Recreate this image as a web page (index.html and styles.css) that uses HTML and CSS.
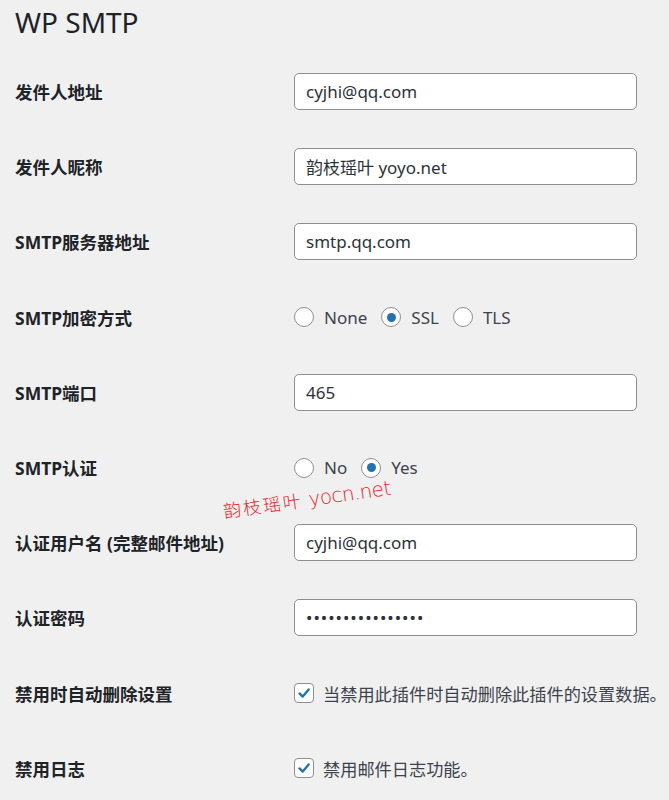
FILE: index.html
```html
<!DOCTYPE html>
<html lang="zh-CN">
  <head>
    <meta charset="UTF-8" />
    <title>WP SMTP</title>
    <link rel="stylesheet" href="styles.css">
  </head>
  <body>
    <div class="wrap">
      <h1>WP SMTP</h1>

      <form class="form-table">
        <div class="row">
          <label class="row-label">发件人地址</label>
          <input class="text-input" type="text" value="cyjhi@qq.com" />
        </div>

        <div class="row">
          <label class="row-label">发件人昵称</label>
          <input class="text-input" type="text" value="韵枝瑶叶 yoyo.net" />
        </div>

        <div class="row">
          <label class="row-label">SMTP服务器地址</label>
          <input class="text-input" type="text" value="smtp.qq.com" />
        </div>

        <div class="row">
          <label class="row-label">SMTP加密方式</label>
          <div class="options">
            <span class="option"><span class="radio"></span>None</span>
            <span class="option"><span class="radio checked"></span>SSL</span>
            <span class="option"><span class="radio"></span>TLS</span>
          </div>
        </div>

        <div class="row">
          <label class="row-label">SMTP端口</label>
          <input class="text-input" type="text" value="465" />
        </div>

        <div class="row">
          <label class="row-label">SMTP认证</label>
          <div class="options">
            <span class="option"><span class="radio"></span>No</span>
            <span class="option"><span class="radio checked"></span>Yes</span>
          </div>
        </div>

        <div class="row watermark-row">
          <label class="row-label">认证用户名 (完整邮件地址)</label>
          <input class="text-input" type="text" value="cyjhi@qq.com" />
          <span class="watermark">韵枝瑶叶 <em>yocn.net</em></span>
        </div>

        <div class="row">
          <label class="row-label">认证密码</label>
          <input class="text-input password" type="text" value="••••••••••••••••" />
        </div>

        <div class="row">
          <label class="row-label">禁用时自动删除设置</label>
          <span class="option check-option">
            <span class="checkbox">
              <svg viewBox="0 0 20 20" width="20" height="20">
                <path d="M5 10.5 L8.6 14 L15.2 6" fill="none" stroke="#2271b1" stroke-width="2.6" stroke-linecap="round" stroke-linejoin="round" />
              </svg>
            </span>当禁用此插件时自动删除此插件的设置数据。
          </span>
        </div>

        <div class="row">
          <label class="row-label">禁用日志</label>
          <span class="option check-option">
            <span class="checkbox">
              <svg viewBox="0 0 20 20" width="20" height="20">
                <path d="M5 10.5 L8.6 14 L15.2 6" fill="none" stroke="#2271b1" stroke-width="2.6" stroke-linecap="round" stroke-linejoin="round" />
              </svg>
            </span>禁用邮件日志功能。
          </span>
        </div>
      </form>
    </div>
  </body>
</html>
```

FILE: styles.css
```css
:root {
  --bg-color: #f0f0f1;
  --text-color: #1d2327;
  --muted-text: #3c434a;
  --border-color: #8c8f94;
  --accent-color: #2271b1;
}

body {
  margin: 0;
  padding: 0;
  background-color: var(--bg-color);
  color: var(--text-color);
  font-family: "Segoe UI", "Noto Sans", "Noto Sans CJK SC", sans-serif;
  overflow: hidden;
}

.wrap {
  padding: 0 15px;
}

h1 {
  margin: 0;
  padding-top: 3px;
  font-size: 28px;
  font-weight: 400;
  line-height: 38px;
  color: var(--text-color);
}

.form-table {
  margin-top: 13px;
}

.row {
  display: grid;
  grid-template-columns: 279px 343px;
  align-items: center;
  height: 75.2px;
}

.row-label {
  font-size: 17.5px;
  font-weight: 700;
  color: var(--text-color);
  font-family: "Noto Sans", "Noto Sans CJK SC", sans-serif;
}

.text-input {
  box-sizing: border-box;
  width: 343px;
  height: 37px;
  padding: 0 11px;
  border: 1px solid var(--border-color);
  border-radius: 5px;
  background-color: #fff;
  color: #2c3338;
  font-family: "Noto Sans", "Noto Sans CJK SC", sans-serif;
  font-size: 17px;
  outline: none;
}

.text-input.password {
  font-size: 17px;
  letter-spacing: 1px;
}

.options {
  display: flex;
  align-items: center;
  gap: 14px;
}

.option {
  display: inline-flex;
  align-items: center;
  gap: 10px;
  font-size: 17px;
  color: var(--muted-text);
  font-family: "Noto Sans", "Noto Sans CJK SC", sans-serif;
  white-space: nowrap;
}

.check-option {
  gap: 9px;
  font-size: 17.2px;
}

.radio {
  box-sizing: border-box;
  width: 20px;
  height: 20px;
  border: 1px solid var(--border-color);
  border-radius: 50%;
  background-color: #fff;
  display: inline-flex;
  align-items: center;
  justify-content: center;
}

.radio.checked::after {
  content: "";
  width: 9px;
  height: 9px;
  border-radius: 50%;
  background-color: var(--accent-color);
}

.checkbox {
  box-sizing: border-box;
  width: 20px;
  height: 20px;
  border: 1px solid var(--border-color);
  border-radius: 4px;
  background-color: #fff;
  display: inline-flex;
  align-items: center;
  justify-content: center;
}

.checkbox svg {
  display: block;
}

.watermark-row {
  position: relative;
}

.watermark {
  position: absolute;
  left: 210px;
  top: -8px;
  color: #e8242a;
  font-family: "Noto Sans CJK SC", sans-serif;
  font-size: 18px;
  font-weight: 300;
  letter-spacing: 2px;
  transform: rotate(-8deg);
  transform-origin: left bottom;
  white-space: nowrap;
}

.watermark em {
  font-style: normal;
  font-family: "DejaVu Sans", sans-serif;
  font-size: 20px;
  letter-spacing: -0.5px;
}
```
